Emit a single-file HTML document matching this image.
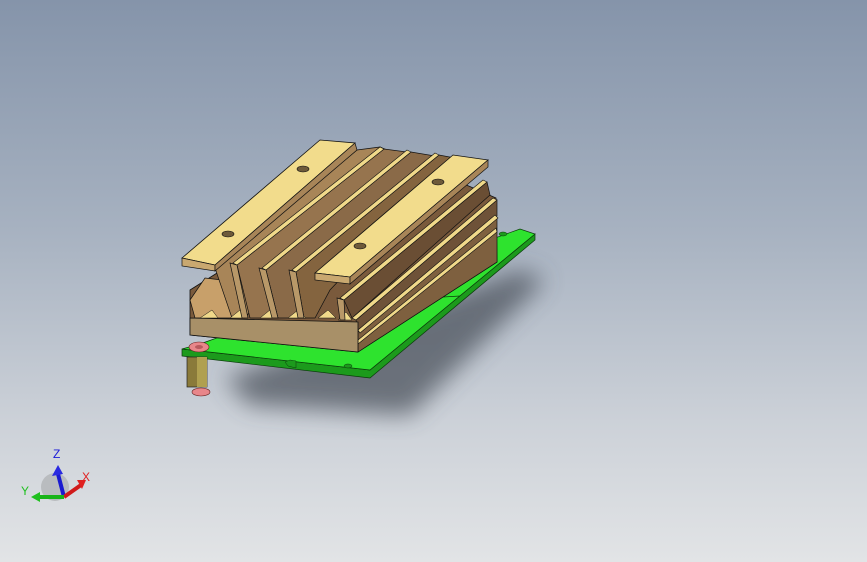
<!DOCTYPE html>
<html><head><meta charset="utf-8"><style>
html,body{margin:0;padding:0}
body{width:867px;height:562px;overflow:hidden;background:linear-gradient(180deg,#8594aa 0%,#a6b1c0 40%,#ccd1d8 75%,#e2e4e6 100%);font-family:"Liberation Sans",sans-serif}
svg{position:absolute;left:0;top:0}
</style></head><body>
<svg width="867" height="562" viewBox="0 0 867 562">
<defs>
<filter id="bl" x="-30%" y="-50%" width="160%" height="200%"><feGaussianBlur stdDeviation="12"/></filter>
</defs>
<!-- shadow -->
<polygon points="225,378 520,270 545,280 410,415 250,405" fill="#454b55" opacity="0.7" filter="url(#bl)"/>
<!-- PCB -->
<polygon points="182,356 370,378 535,240 535,234 370,370 182,349" fill="#1c9a1c" stroke="#0b3a0b" stroke-width="0.7"/>
<polygon points="182,349 370,370 535,234 520,229 200,344" fill="#2ee32e" stroke="#0b3a0b" stroke-width="0.7"/>
<polygon points="285,362 290,360 296,361 296,368 288,366" fill="#1c9a1c" stroke="#0b3a0b" stroke-width="0.5"/>
<line x1="443" y1="297" x2="460" y2="296" stroke="#0b3a0b" stroke-width="0.8"/>
<ellipse cx="348" cy="366" rx="4" ry="2" fill="#1c9a1c" stroke="#0b3a0b" stroke-width="0.5"/>
<ellipse cx="503" cy="234" rx="4" ry="2" fill="#1c9a1c" stroke="#0b3a0b" stroke-width="0.5"/>
<!-- standoff -->
<rect x="187" y="357" width="20" height="30" fill="#8a7a3a" stroke="#222" stroke-width="0.7"/>
<rect x="197" y="357" width="10" height="30" fill="#b0a050"/>
<ellipse cx="201" cy="392" rx="9" ry="4" fill="#e8868a" stroke="#622" stroke-width="0.6"/>
<ellipse cx="199" cy="347" rx="10" ry="5" fill="#e8868a" stroke="#622" stroke-width="0.6"/>
<ellipse cx="199" cy="347" rx="4" ry="2" fill="#b85a5e"/>
<!-- heatsink body hull -->
<polygon points="190,290 233,263 380,147 496,198 497,262 358,352 190,335" fill="#7a5a3c" stroke="#111" stroke-width="0.8"/>
<!-- left fin end -->
<polygon points="190,300 205,278 222,280 232,318 195,318" fill="#c8a06a" stroke="#111" stroke-width="0.7"/>
<!-- fin faces -->
<polygon points="215,268 357,150 380,147 245,318 232,318" fill="#a88558" stroke="#111" stroke-width="0.7"/>
<polygon points="237,265 384,149 407,152 272,318 250,318" fill="#96744e" stroke="#111" stroke-width="0.7"/>
<polygon points="266,270 411,152 435,156 300,318 278,318" fill="#8a6a48" stroke="#111" stroke-width="0.7"/>
<polygon points="296,272 439,155 455,158 330,290 315,318 304,318" fill="#84643f" stroke="#111" stroke-width="0.7"/>
<polygon points="344,300 487,182 490,195 352,318" fill="#6a4e34" stroke="#111" stroke-width="0.7"/>
<polygon points="356,320 497,200 497,216 358,330" fill="#6e5238" stroke="#111" stroke-width="0.7"/>
<polygon points="358,332 497,218 497,262 358,352" fill="#7e603f" stroke="#111" stroke-width="0.7"/>
<!-- fin top edges -->
<g stroke="#111" stroke-width="0.6" fill="#f0d98a">
<polygon points="233,263 380,147 384,149 237,265"/>
<polygon points="262,268 407,150 411,152 266,270"/>
<polygon points="292,270 435,153 439,155 296,272"/>
<polygon points="340,298 483,180 487,182 344,300"/>
<polygon points="352,318 493,198 497,200 356,320"/>
<polygon points="358,330 495,215 498,218 360,333"/>
<polygon points="358,340 496,228 497,232 358,344"/>
</g>
<!-- base front face -->
<polygon points="190,318 358,322 358,352 190,335" fill="#a89068" stroke="#111" stroke-width="0.8"/>
<!-- fin fronts & gaps -->
<g fill="#f0d98a" stroke="#111" stroke-width="0.5">
<polygon points="200,318 212,310 218,318"/><polygon points="230,318 240,310 248,318"/>
<polygon points="260,318 270,310 278,318"/><polygon points="288,318 298,310 306,318"/>
<polygon points="318,318 328,310 336,318"/><polygon points="338,320 346,312 352,320"/>
</g>
<g stroke="#111" stroke-width="0.7" fill="#b89868">
<polygon points="230,263 237,265 248,318 242,318"/>
<polygon points="259,268 266,270 278,318 272,318"/>
<polygon points="289,270 296,272 304,318 298,318"/>
<polygon points="337,298 344,300 345,320 340,320"/>
</g>
<!-- flanges -->
<polygon points="182,258 320,140 355,143 215,265" fill="#f2dc8c" stroke="#111" stroke-width="0.8"/>
<polygon points="182,258 215,265 215,271 182,266" fill="#c9a870" stroke="#111" stroke-width="0.7"/>
<polygon points="215,265 355,143 357,150 215,271" fill="#a88558" stroke="#111" stroke-width="0.7"/>
<polygon points="315,273 453,155 488,160 350,277" fill="#f2dc8c" stroke="#111" stroke-width="0.8"/>
<polygon points="315,273 350,277 350,284 315,280" fill="#c9a870" stroke="#111" stroke-width="0.7"/>
<polygon points="350,277 488,160 488,167 350,284" fill="#a88558" stroke="#111" stroke-width="0.7"/>
<g fill="#6e5a3a" stroke="#111" stroke-width="0.6">
<ellipse cx="228" cy="234" rx="6" ry="3"/><ellipse cx="303" cy="169" rx="6" ry="3"/>
<ellipse cx="360" cy="246" rx="6" ry="3"/><ellipse cx="438" cy="182" rx="6" ry="3"/>
</g>
<!-- triad -->
<circle cx="55" cy="487" r="14" fill="#b9bcbf"/>
<line x1="64" y1="497" x2="58" y2="474" stroke="#1a1ad0" stroke-width="4"/>
<polygon points="52,476 58,465 63,474" fill="#2a2ae0"/>
<line x1="64" y1="497" x2="81" y2="485" stroke="#d01a1a" stroke-width="4"/>
<polygon points="77,480 86,480 82,489" fill="#e02020"/>
<line x1="64" y1="497" x2="38" y2="497" stroke="#18b418" stroke-width="4"/>
<polygon points="40,492 31,497 40,502" fill="#20c020"/>
<text x="53" y="458" font-size="12" fill="#1a1ad8" font-family="Liberation Sans,sans-serif">Z</text>
<text x="82" y="481" font-size="12" fill="#e02020" font-family="Liberation Sans,sans-serif">X</text>
<text x="21" y="495" font-size="12" fill="#20c020" font-family="Liberation Sans,sans-serif">Y</text>
</svg>
</body></html>
